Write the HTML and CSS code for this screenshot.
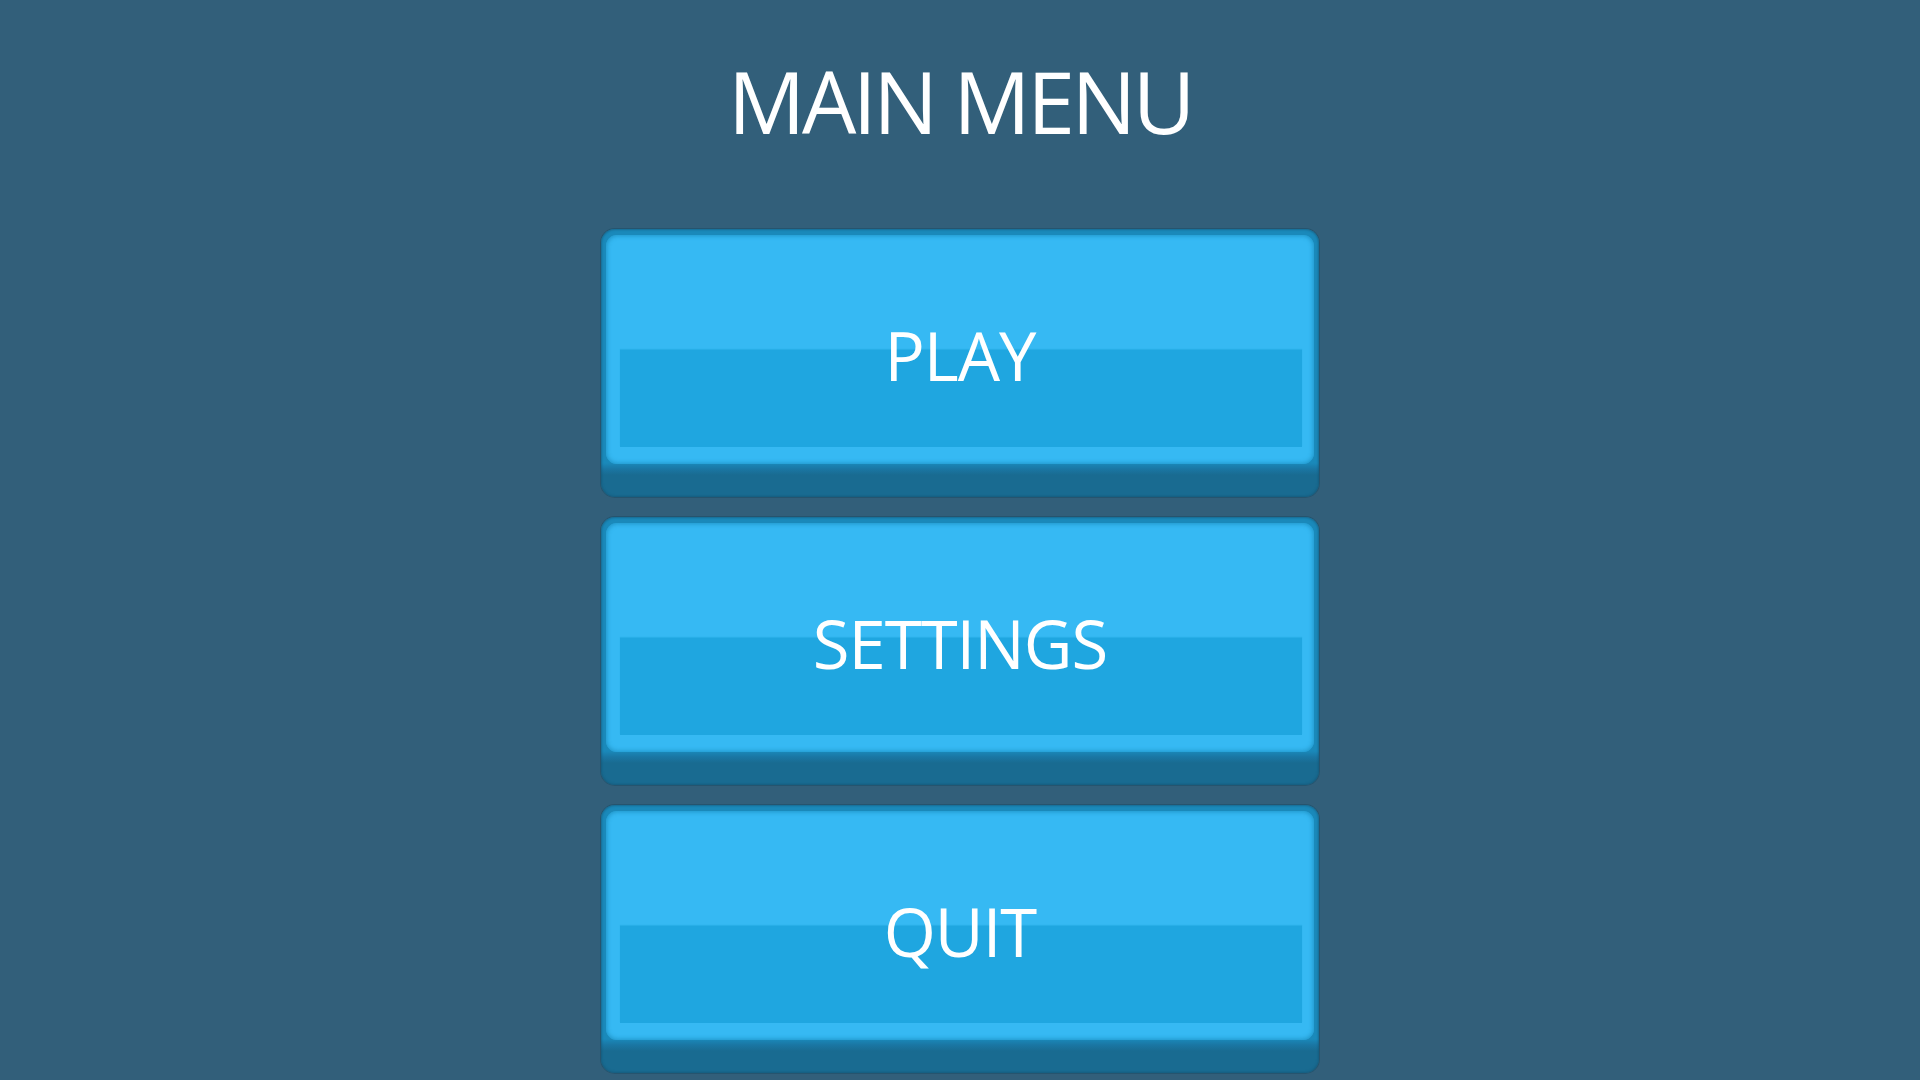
FILE: index.html
```html
<!DOCTYPE html>
<html lang="en">
<head>
<meta charset="utf-8">
<title>Main Menu</title>
<link rel="stylesheet" href="styles.css">
</head>
<body>
<main class="menu">
  <h1 class="title">MAIN MENU</h1>
  <nav class="buttons">
    <button class="btn"><span class="face"><span class="band"></span><span class="label">PLAY</span></span></button>
    <button class="btn"><span class="face"><span class="band"></span><span class="label">SETTINGS</span></span></button>
    <button class="btn"><span class="face"><span class="band"></span><span class="label">QUIT</span></span></button>
  </nav>
</main>
</body>
</html>
```

FILE: styles.css
```css
html, body {
  margin: 0;
  padding: 0;
  height: 100%;
}
body {
  background: #325f7a;
  font-family: "Open Sans", "Noto Sans", sans-serif;
  color: #ffffff;
  overflow: hidden;
}
.menu {
  display: flex;
  flex-direction: column;
  align-items: center;
}
.title {
  margin: 45px 0 0 0;
  font-size: 86px;
  font-weight: 400;
  line-height: 112px;
  letter-spacing: -3.5px;
  height: 112px;
}
.buttons {
  margin-top: 72px;
  display: flex;
  flex-direction: column;
  gap: 20px;
}
.btn {
  width: 718px;
  height: 268px;
  box-sizing: border-box;
  border: 0;
  margin: 0;
  padding: 6px 5px 0 5px;
  border-radius: 14px;
  background: linear-gradient(to bottom, #1a89ba 0, #1a89ba 234px, #1a76a3 240px, #196b91 246px, #196b91 100%);
  box-shadow: 0 0 0 1px rgba(25, 70, 95, 0.45), inset 0 0 2px 1px rgba(20, 80, 110, 0.5);
  font: inherit;
  color: inherit;
  cursor: pointer;
  display: flex;
  align-items: flex-start;
}
.face {
  display: grid;
  grid-template-columns: 1fr;
  grid-template-rows: 1fr;
  width: 100%;
  height: 229px;
  box-sizing: border-box;
  border-radius: 11px;
  background: #36b9f3;
  box-shadow: inset 0 0 4px 1px rgba(26, 137, 186, 0.75);
  padding: 115px 12px 0 14px;
}
.band {
  grid-area: 1 / 1;
  height: 97px;
  background: #1fa6e0;
  align-self: start;
  box-shadow: 0 -1px 1px rgba(31, 166, 224, 0.6);
}
.label {
  grid-area: 1 / 1;
  align-self: start;
  justify-self: center;
  margin-top: -40px;
  margin-left: -2px;
  font-size: 67px;
  line-height: 90px;
  letter-spacing: -1px;
  color: #ffffff;
}
```
